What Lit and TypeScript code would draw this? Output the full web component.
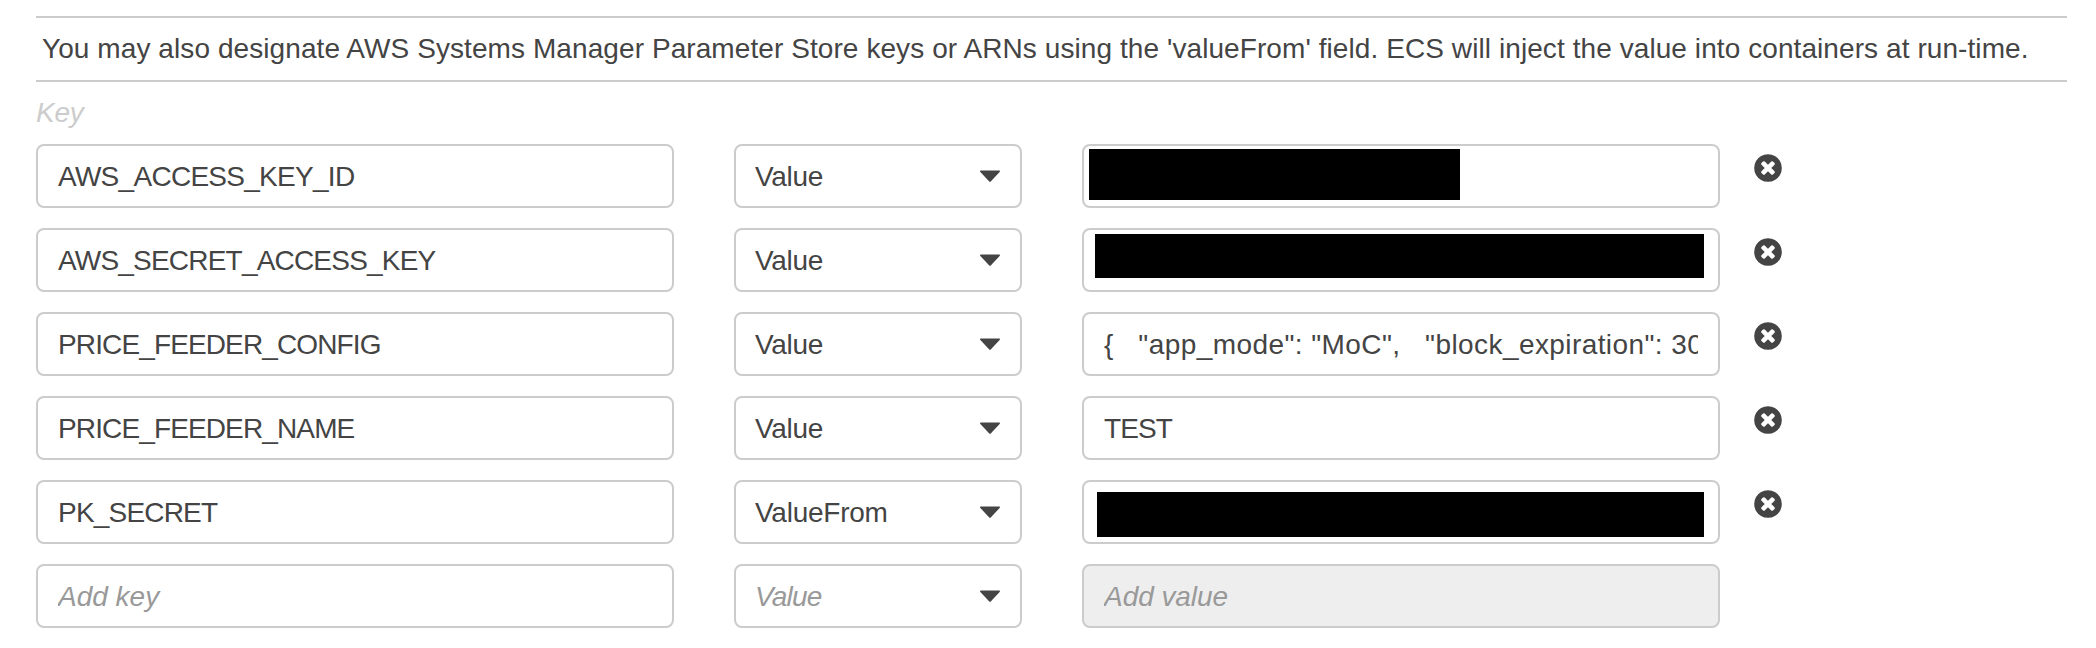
import { LitElement, html, css, nothing } from "lit";
import { customElement, property } from "lit/decorators.js";
import { classMap } from "lit/directives/class-map.js";

interface Mask { left: number; top: number; width: number; height: number; }
interface Label { text: string; tracking: number; }
interface EnvVar { key: Label; type: Label; value?: Label; mask?: Mask; draft?: boolean; }

const VALUE: Label = { text: "Value", tracking: -0.3 };

const ROWS: EnvVar[] = [
  { key: { text: "AWS_ACCESS_KEY_ID", tracking: -0.72 }, type: VALUE, mask: { left: 5, top: 3, width: 371, height: 51 } },
  { key: { text: "AWS_SECRET_ACCESS_KEY", tracking: -0.8 }, type: VALUE, mask: { left: 11, top: 4, width: 609, height: 44 } },
  {
    key: { text: "PRICE_FEEDER_CONFIG", tracking: -0.87 }, type: VALUE,
    value: { text: '{   "app_mode": "MoC",   "block_expiration": 30, ', tracking: 0.42 },
  },
  { key: { text: "PRICE_FEEDER_NAME", tracking: -0.87 }, type: VALUE, value: { text: "TEST", tracking: -0.9 } },
  { key: { text: "PK_SECRET", tracking: -0.8 }, type: { text: "ValueFrom", tracking: -0.25 }, mask: { left: 13, top: 10, width: 607, height: 45 } },
  { key: { text: "Add key", tracking: 0 }, type: { text: "Value", tracking: -0.8 }, value: { text: "Add value", tracking: -0.05 }, draft: true },
];

const label = (l: Label) => html`<span class="text" style="letter-spacing:${l.tracking}px">${l.text}</span>`;

@customElement("env-row")
class EnvRow extends LitElement {
  @property({ attribute: false }) row!: EnvVar;

  static styles = css`
    :host { display: grid; grid-template-columns: 638px 288px 638px 28px; column-gap: 60px; height: 64px; }
    .field {
      position: relative; box-sizing: border-box; height: 64px; padding: 0 20px;
      border: 2px solid #ccc; border-radius: 8px; background: #fff;
      display: flex; align-items: center; color: #444;
    }
    .select { justify-content: space-between; padding-left: 19px; }
    .clip { display: flex; flex: 1; min-width: 0; overflow: hidden; }
    .text { white-space: pre; line-height: 36px; padding-top: 2px; }
    .draft .text { color: #999; font-style: italic; }
    .disabled { background: #eee; }
    .mask { position: absolute; background: #000; }
    .caret { width: 20px; height: 12px; display: block; }
    .remove { width: 28px; height: 28px; display: block; margin: 10px 0 0 -26px; }
  `;

  render() {
    const { key, type, value, mask, draft } = this.row;
    return html`
      <div class=${classMap({ field: true, draft: !!draft })}><div class="clip">${label(key)}</div></div>
      <div class=${classMap({ field: true, select: true, draft: !!draft })}>
        ${label(type)}
        <svg class="caret" viewBox="0 0 20 12"><path d="M.7 .4H19.3Q20.6.8 19.6 2L11 11.2Q10 12.2 9 11.2L.4 2Q-.6.8.7 .4Z" fill="#444"/></svg>
      </div>
      <div class=${classMap({ field: true, draft: !!draft, disabled: !!draft })}>
        ${value ? html`<div class="clip">${label(value)}</div>` : nothing}
        ${mask ? html`<div class="mask" style="left:${mask.left}px;top:${mask.top}px;width:${mask.width}px;height:${mask.height}px"></div>` : nothing}
      </div>
      ${draft ? nothing : html`
        <svg class="remove" viewBox="118 118 1556 1556">
          <path fill="#444" d="M1277 1122q0-26-19-45l-181-181 181-181q19-19 19-45 0-27-19-46l-90-90q-19-19-46-19-26 0-45 19l-181 181-181-181q-19-19-45-19-27 0-46 19l-90 90q-19 19-19 46 0 26 19 45l181 181-181 181q-19 19-19 45 0 27 19 46l90 90q19 19 46 19 26 0 45-19l181-181 181 181q19 19 45 19 27 0 46-19l90-90q19-19 19-46zM1664 896q0 209-103 385.500t-279.500 279.500-385.500 103-385.500-103-279.500-279.500-103-385.500 103-385.500 279.500-279.500 385.500-103 385.500 103 279.500 279.500 103 385.500z"/>
        </svg>`}
    `;
  }
}

@customElement("app-root")
class AppRoot extends LitElement {
  static styles = css`
    :host {
      display: block; box-sizing: border-box; height: 648px; overflow: hidden; background: #fff;
      padding: 16px 29px 0 36px; color: #444;
      font: 28px/36px "Liberation Sans", Arial, sans-serif;
    }
    .note {
      box-sizing: border-box; height: 66px; padding: 13px 0 0 6px; white-space: nowrap;
      border-top: 2px solid #ccc; border-bottom: 2px solid #ccc; letter-spacing: 0.08px;
    }
    .heading { height: 62px; box-sizing: border-box; padding-top: 13px; color: #ccc; font-style: italic; letter-spacing: -0.3px; }
    .rows { display: grid; row-gap: 20px; }
  `;

  render() {
    return html`
      <div class="note">You may also designate AWS Systems Manager Parameter Store keys or ARNs using the 'valueFrom' field. ECS will inject the value into containers at run-time.</div>
      <div class="heading">Key</div>
      <div class="rows">${ROWS.map((row) => html`<env-row .row=${row}></env-row>`)}</div>
    `;
  }
}
